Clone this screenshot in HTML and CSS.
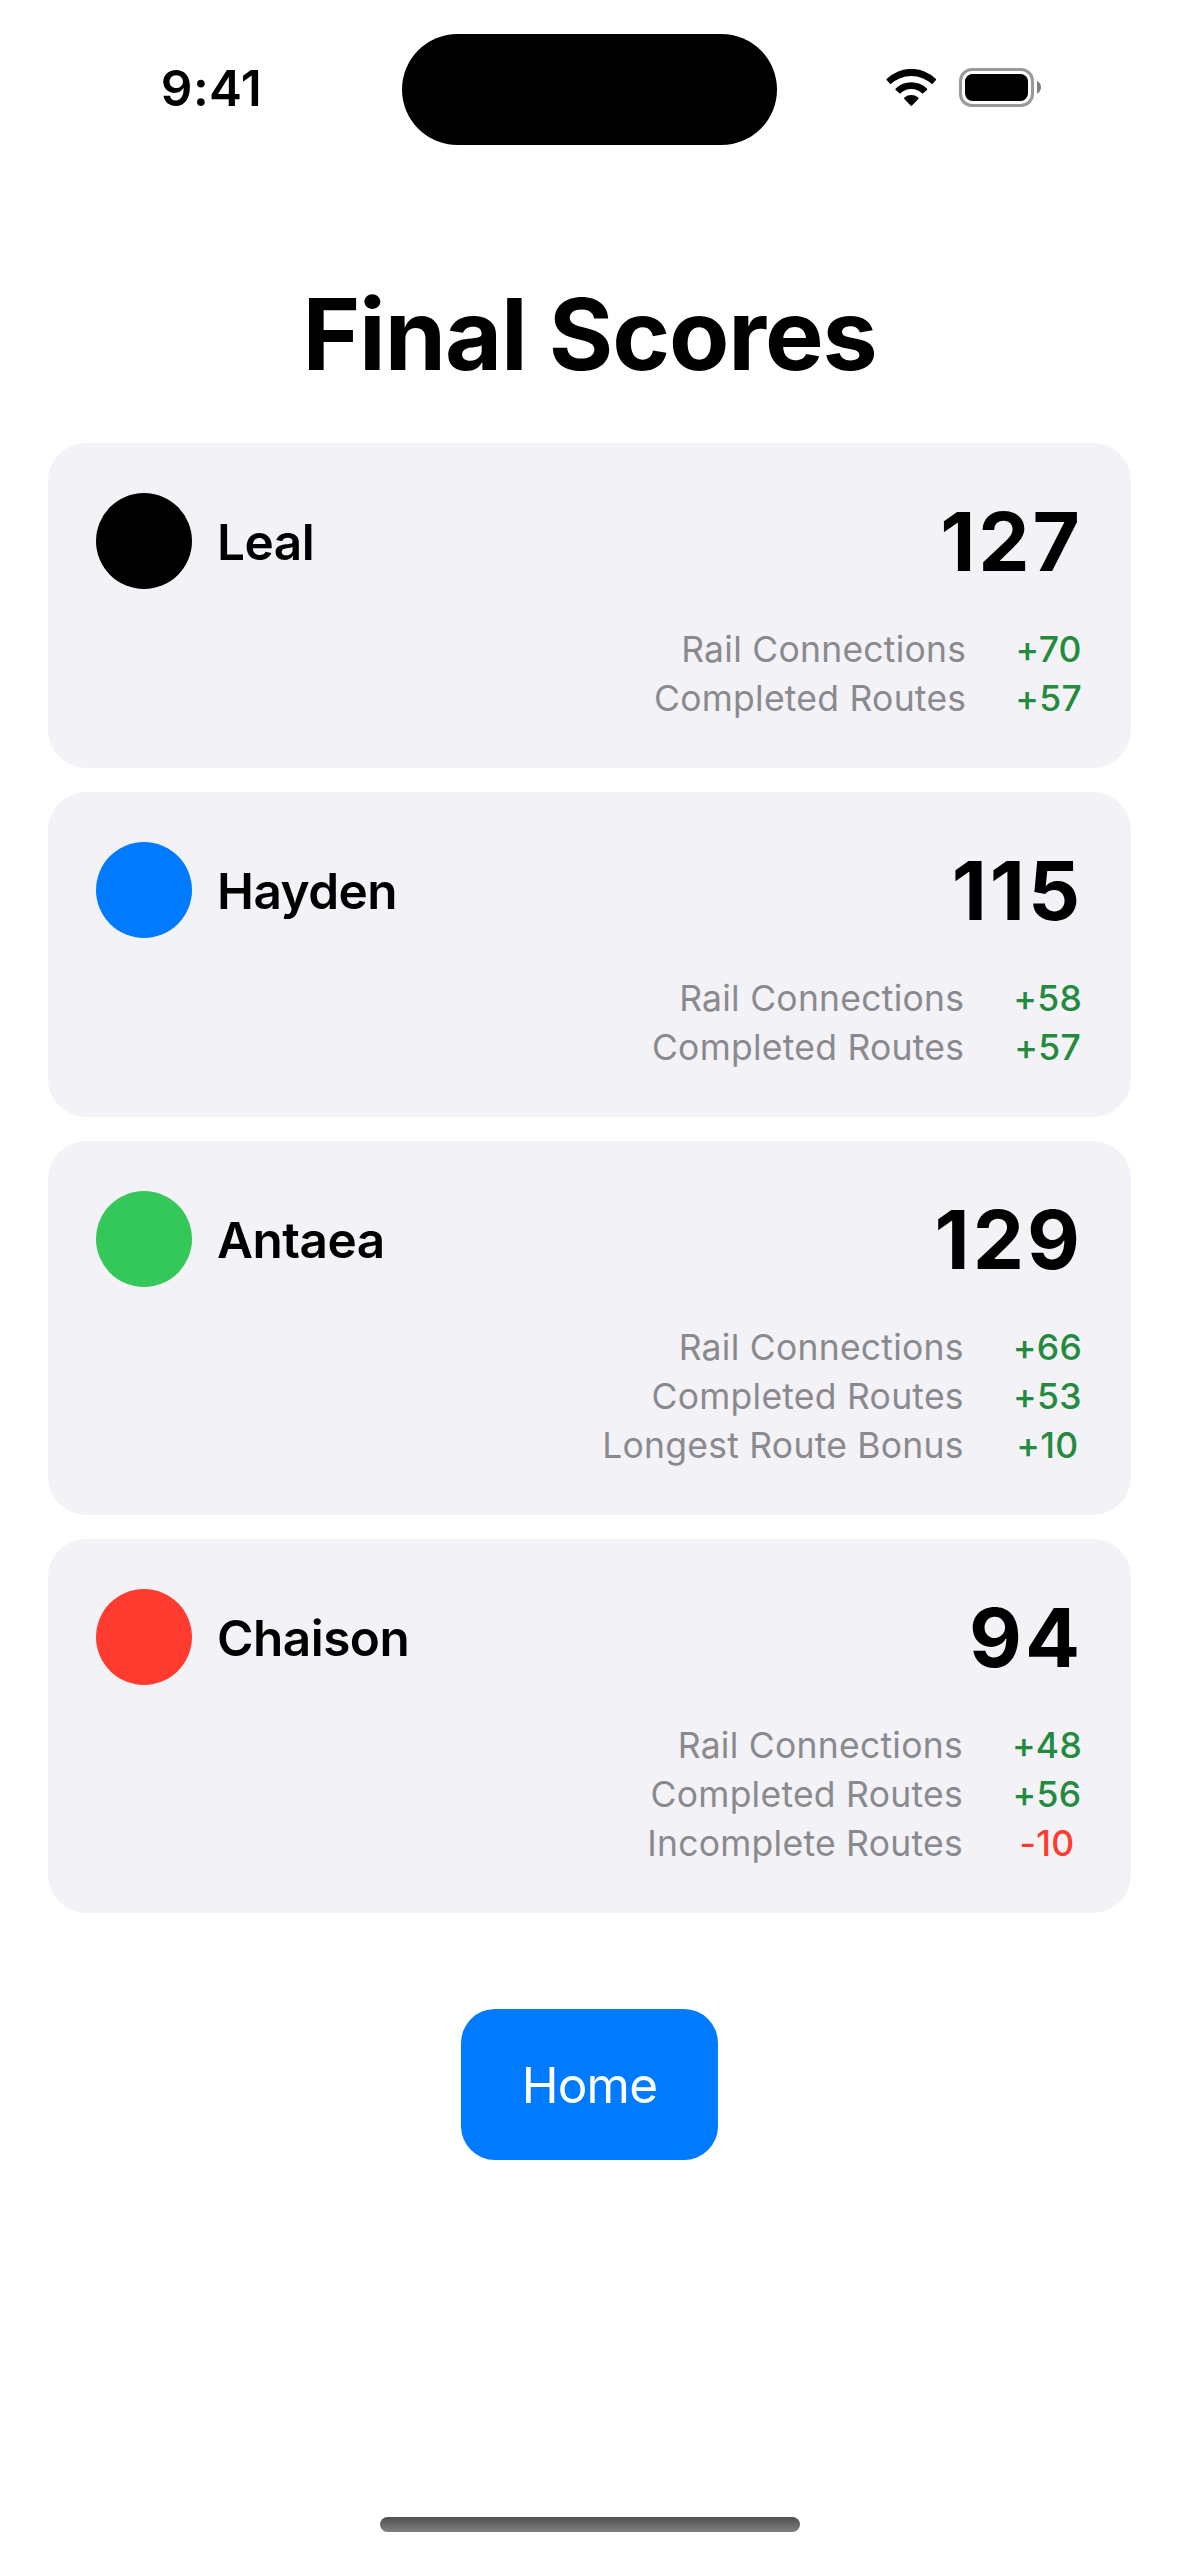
FILE: index.html
```html
<!DOCTYPE html>
<html lang="en">
<head>
    <meta charset="UTF-8">
    <meta name="viewport" content="width=device-width, initial-scale=1.0">
    <title>Final Scores</title>
    <link rel="stylesheet" href="styles.css">
</head>
<body>

<div class="screen">
    <div class="status-bar">
        <div class="time">9:41</div>
        <div class="island"></div>
        <div class="status-icons">
            <svg class="wifi" width="51" height="38" viewBox="0 0 51 38">
                <path d="M.9 11.3Q0 10.5.9 9.8A35 35 0 0 1 49.7 9.8Q50.6 10.5 49.7 11.3L46.2 15.3A30.5 30.5 0 0 0 4.4 15.3Z"/>
                <path d="M9.7 21Q8.9 20.2 9.7 19.5A22.6 22.6 0 0 1 40.9 19.5Q41.7 20.2 40.9 21L36.6 24.7A16 16 0 0 0 14 24.7Z"/>
                <path d="M18.3 30Q17.6 29.2 18.4 28.4A10.8 10.8 0 0 1 32.2 28.4Q33 29.2 32.3 30L26 36.6Q25.3 37.2 24.6 36.6Z"/>
            </svg>
            <svg class="battery" width="83" height="40" viewBox="0 0 83 40">
                <rect x="1.5" y="1.5" width="72" height="36" rx="11.5" fill="none" stroke="#999" stroke-width="3"/>
                <rect x="6" y="6" width="63" height="27" rx="7.5"/>
                <path d="M78 13C80.7 14.2 82 16.5 82 19.3S80.7 24.500 78 25.700Z" fill="#808080"/>
            </svg>
        </div>
    </div>

    <h1>Final Scores</h1>

    <div class="players">
        <div class="card">
            <div class="player">
                <span class="dot black"></span>
                <span class="name">Leal</span>
                <span class="total">127</span>
            </div>
            <div class="details">
                <span>Rail Connections</span><span class="plus">+70</span>
                <span>Completed Routes</span><span class="plus">+57</span>
            </div>
        </div>

        <div class="card">
            <div class="player">
                <span class="dot blue"></span>
                <span class="name">Hayden</span>
                <span class="total">115</span>
            </div>
            <div class="details">
                <span>Rail Connections</span><span class="plus">+58</span>
                <span>Completed Routes</span><span class="plus">+57</span>
            </div>
        </div>

        <div class="card">
            <div class="player">
                <span class="dot green"></span>
                <span class="name">Antaea</span>
                <span class="total">129</span>
            </div>
            <div class="details">
                <span>Rail Connections</span><span class="plus">+66</span>
                <span>Completed Routes</span><span class="plus">+53</span>
                <span>Longest Route Bonus</span><span class="plus">+10</span>
            </div>
        </div>

        <div class="card">
            <div class="player">
                <span class="dot red"></span>
                <span class="name">Chaison</span>
                <span class="total">94</span>
            </div>
            <div class="details">
                <span>Rail Connections</span><span class="plus">+48</span>
                <span>Completed Routes</span><span class="plus">+56</span>
                <span>Incomplete Routes</span><span class="minus">-10</span>
            </div>
        </div>
    </div>

    <button class="home-btn">Home</button>

    <div class="home-indicator"></div>
</div>

</body>
</html>
```
FILE: styles.css
```css
* {
    box-sizing: border-box;
}
body {
    margin: 0;
    background-color: white;
    color: black;
    font-family: Inter, "Liberation Sans", sans-serif;
}
.screen {
    display: flex;
    flex-direction: column;
    align-items: center;
    width: 1179px;
    height: 2556px;
    padding-bottom: 24px;
}
.status-bar {
    display: grid;
    grid-template-columns: 1fr 375px 1fr;
    align-items: center;
    width: 100%;
    height: 178px;
}
.time {
    padding: 0 0 3px 21px;
    font-size: 49.5px;
    font-weight: 600;
    letter-spacing: 0.4px;
    text-align: center;
}
.island {
    height: 111px;
    border-radius: 56px;
    background-color: black;
}
.status-icons {
    display: flex;
    align-items: center;
    gap: 22px;
    padding: 0 0 2px 109px;
}
h1 {
    margin: 95px 0 0;
    font-size: 98.5px;
    font-weight: 700;
    line-height: 124px;
    letter-spacing: -1.1px;
}
.players {
    display: flex;
    flex-direction: column;
    gap: 24px;
    width: 1083px;
    margin-top: 46px;
}
.card {
    padding: 48px;
    border-radius: 38px;
    background-color: #f2f2f7;
}
.player {
    display: flex;
    align-items: center;
    height: 100px;
}
.dot {
    width: 96px;
    height: 96px;
    margin-right: 25px;
    border-radius: 50%;
}
.black {
    background-color: #000;
}
.blue {
    background-color: #007aff;
}
.green {
    background-color: #34c759;
}
.red {
    background-color: #ff3b30;
}
.name {
    padding-top: 2px;
    font-size: 49.5px;
    font-weight: 600;
    letter-spacing: -0.5px;
}
.total {
    margin-left: auto;
    font-size: 81.5px;
    font-weight: 700;
    letter-spacing: 3px;
}
.details {
    display: grid;
    grid-template-columns: auto auto;
    justify-content: end;
    column-gap: 49px;
    margin: 34px 0 -3px;
    padding-right: 1px;
    color: #8a8a8e;
    font-size: 35.5px;
    line-height: 49px;
    letter-spacing: 0.25px;
    text-align: right;
}
.plus, .minus {
    font-weight: 500;
    text-align: center;
}
.plus {
    color: #248a3d;
}
.minus {
    color: #ff3b30;
}
.home-btn {
    width: 257px;
    height: 151px;
    margin-top: 96px;
    border: none;
    border-radius: 34px;
    background-color: #007aff;
    color: white;
    font-family: inherit;
    font-size: 49.5px;
    letter-spacing: -0.8px;
    cursor: pointer;
}
.home-indicator {
    width: 420px;
    height: 15px;
    margin-top: auto;
    border-radius: 8px;
    background: linear-gradient(#505050, #808080);
}
```
